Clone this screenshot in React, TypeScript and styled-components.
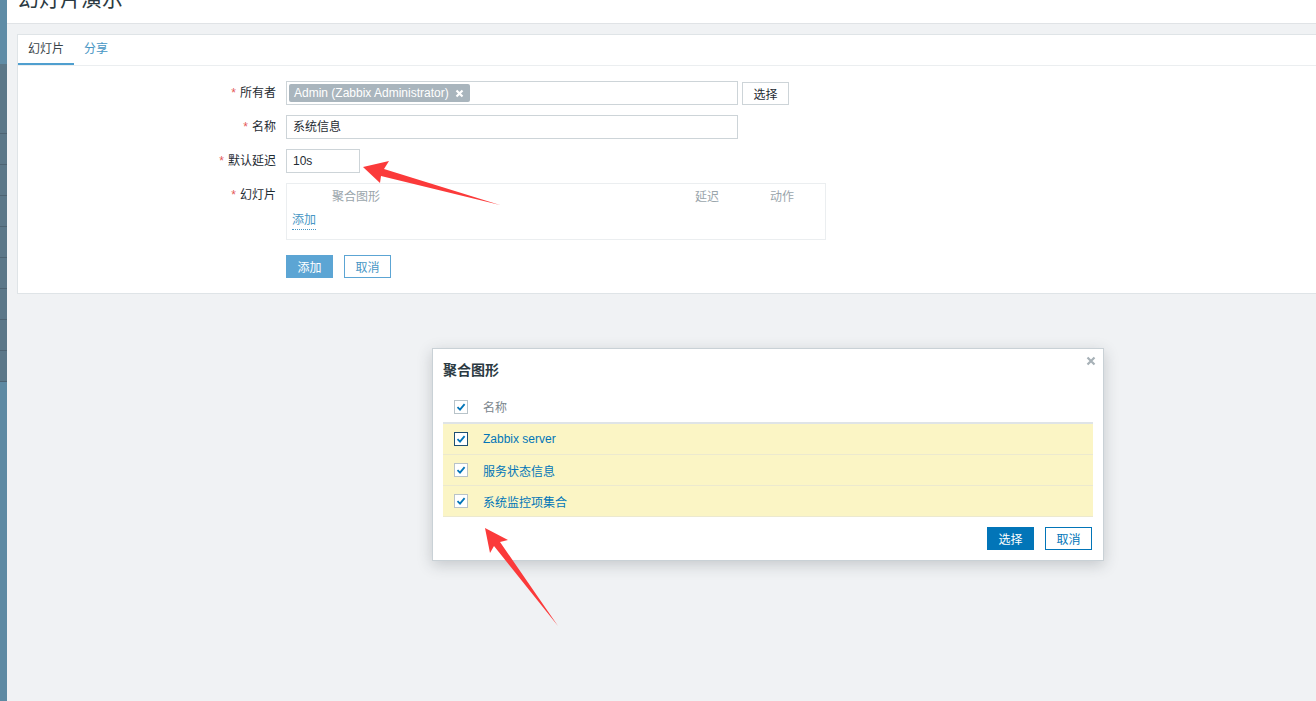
import React from 'react';
import styled, { createGlobalStyle } from 'styled-components';

const GlobalStyle = createGlobalStyle`
html, body {
  margin: 0;
  padding: 0;
}
body {
  font-family: "Liberation Sans", Arial, "Noto Sans CJK SC", sans-serif;
  font-size: 12px;
  color: #1f2c33;
  background: #f0f2f4;
  overflow: hidden;
}
* {
  box-sizing: border-box;
}
`;

const Page = styled.div`
position: relative;
display: flex;
width: 100%;
height: 100vh;
overflow: hidden;
`;

const Sidebar = styled.div`
width: 7px;
flex-shrink: 0;
background: #5e8aa3;
display: flex;
flex-direction: column;
`;

const SideLogo = styled.div`
height: 64px;
background: #5f8ca6;
`;

const SideItem = styled.div<{ $tall?: boolean }>`
height: ${(p) => (p.$tall ? '70px' : '31px')};
background: #5b7788;
border-bottom: 1px solid #4d6372;
`;

const Main = styled.div`
flex: 1;
display: flex;
flex-direction: column;
min-width: 0;
`;

const Header = styled.div`
height: 24px;
background: #ffffff;
border-bottom: 1px solid #e0e3e6;
padding-left: 11px;
overflow: hidden;
`;

const Title = styled.h1`
margin: -13px 0 0 0;
font-size: 21px;
font-weight: normal;
line-height: 24px;
color: #2b3a42;
`;

const Content = styled.div`
padding: 10px 0 0 10px;
`;

const Card = styled.div`
background: #ffffff;
border: 1px solid #dfe4e7;
margin-right: -2px;
`;

const TabStrip = styled.div`
display: flex;
border-bottom: 1px solid #ebeef0;
`;

const Tab = styled.div<{ $active?: boolean }>`
padding: 0 10px;
line-height: 28px;
border-bottom: 2px solid ${(p) => (p.$active ? '#4f9fcf' : 'transparent')};
color: ${(p) => (p.$active ? '#3a444a' : '#4796c4')};
cursor: pointer;
`;

const Form = styled.div`
display: grid;
grid-template-columns: 258px 1fr;
column-gap: 10px;
row-gap: 10px;
padding: 15px 0 15px;
`;

const Label = styled.div`
text-align: right;
line-height: 24px;
color: #1f2c33;
`;

const Req = styled.span`
color: #e45959;
margin-right: 4px;
`;

const Field = styled.div`
display: flex;
align-items: flex-start;
gap: 4px;
`;

const MultiBox = styled.div`
width: 452px;
height: 24px;
border: 1px solid #cdd4d8;
padding: 2px;
display: flex;
align-items: center;
`;

const TagChip = styled.span`
display: inline-flex;
align-items: center;
gap: 6px;
height: 18px;
padding: 0 6px 0 5px;
background: #a9b5bd;
color: #ffffff;
border-radius: 2px;
line-height: 18px;
`;

const TextInput = styled.div<{ $width: number }>`
width: ${(p) => p.$width}px;
height: 24px;
border: 1px solid #cdd4d8;
padding: 0 6px;
line-height: 22px;
color: #1f2c33;
background: #ffffff;
`;

const PlainBtn = styled.button`
height: 23px;
min-width: 47px;
margin-top: 1px;
padding: 0 10px;
background: #ffffff;
border: 1px solid #cdd4d8;
color: #1f2c33;
font: inherit;
cursor: pointer;
`;

const SlideTable = styled.div`
width: 540px;
height: 57px;
border: 1px solid #ebeef0;
padding-top: 2px;
`;

const SlideHead = styled.div`
display: grid;
grid-template-columns: 40px 363px 75px 1fr;
line-height: 23px;
color: #9aa5ab;
& > span {
  padding: 0 5px;
}
`;

const AddLink = styled.span`
display: inline-block;
margin-left: 5px;
line-height: 17px;
margin-top: 3px;
color: #4796c4;
border-bottom: 1px dotted #4796c4;
cursor: pointer;
`;

const ButtonRow = styled.div`
grid-column: 2;
display: flex;
gap: 11px;
margin-top: 5px;
`;

const Button = styled.button<{ $primary?: boolean; $tone?: 'light' | 'dark' }>`
height: 23px;
min-width: 47px;
padding: 0 10px;
font: inherit;
cursor: pointer;
border: 1px solid ${(p) => (p.$tone === 'dark' ? '#0275b8' : '#5ca5d4')};
background: ${(p) => (p.$primary ? (p.$tone === 'dark' ? '#0275b8' : '#5ca5d4') : '#ffffff')};
color: ${(p) => (p.$primary ? '#ffffff' : p.$tone === 'dark' ? '#0275b8' : '#4796c4')};
`;

const Modal = styled.div`
position: absolute;
left: 432px;
top: 348px;
width: 672px;
background: #ffffff;
border: 1px solid #c9d1d6;
box-shadow: 0 4px 14px rgba(40, 50, 60, 0.22);
padding: 0 10px 10px;
`;

const ModalTitle = styled.div`
padding-top: 11px;
line-height: 20px;
font-size: 14px;
font-weight: bold;
color: #2b3a42;
margin-bottom: 11px;
`;

const CloseBtn = styled.div`
position: absolute;
top: 6px;
right: 7px;
width: 10px;
height: 10px;
cursor: pointer;
`;

const ListHead = styled.div`
display: flex;
align-items: center;
gap: 15px;
height: 33px;
padding: 0 11px;
border-bottom: 2px solid #dfe4e7;
color: #7a868d;
`;

const ListRow = styled.div`
display: flex;
align-items: center;
gap: 15px;
height: 31px;
padding: 0 11px;
background: #fbf5c5;
border-bottom: 1px solid #ece9cf;
color: #0275b8;
&:last-child {
  border-bottom: none;
  height: 30px;
}
`;

const Box = styled.span<{ $focus?: boolean }>`
display: inline-flex;
align-items: center;
justify-content: center;
width: 14px;
height: 14px;
border: 1px solid ${(p) => (p.$focus ? '#1d4f73' : '#b8c3c9')};
background: #ffffff;
flex-shrink: 0;
`;

const ModalFooter = styled.div`
display: flex;
justify-content: flex-end;
gap: 11px;
padding-top: 10px;
padding-right: 1px;
`;

const Overlay = styled.svg`
position: absolute;
left: 0;
top: 0;
pointer-events: none;
`;

const Check = () => (
  <svg width="12" height="12" viewBox="0 0 12 12">
    <path d="M2.5 6.2 L5 8.6 L9.6 3.2" fill="none" stroke="#0275b8" strokeWidth="1.8" />
  </svg>
);

const CheckBox: React.FC<{ focus?: boolean }> = ({ focus }) => (
  <Box $focus={focus}>
    <Check />
  </Box>
);

const graphs = ['Zabbix server', '服务状态信息', '系统监控项集合'];

const App: React.FC = () => {
  return (
    <Page>
      <GlobalStyle />
      <Sidebar>
        <SideLogo />
        <SideItem $tall />
        {Array.from({ length: 8 }).map((_, i) => (
          <SideItem key={i} />
        ))}
      </Sidebar>
      <Main>
        <Header>
          <Title>幻灯片演示</Title>
        </Header>
        <Content>
          <Card>
            <TabStrip>
              <Tab $active>幻灯片</Tab>
              <Tab>分享</Tab>
            </TabStrip>
            <Form>
              <Label><Req>*</Req>所有者</Label>
              <Field>
                <MultiBox>
                  <TagChip>
                    Admin (Zabbix Administrator)
                    <svg width="9" height="9" viewBox="0 0 9 9">
                      <path d="M1.5 1.5 L7.5 7.5 M7.5 1.5 L1.5 7.5" stroke="#ffffff" strokeWidth="2.2" />
                    </svg>
                  </TagChip>
                </MultiBox>
                <PlainBtn>选择</PlainBtn>
              </Field>

              <Label><Req>*</Req>名称</Label>
              <Field>
                <TextInput $width={452}>系统信息</TextInput>
              </Field>

              <Label><Req>*</Req>默认延迟</Label>
              <Field>
                <TextInput $width={74}>10s</TextInput>
              </Field>

              <Label><Req>*</Req>幻灯片</Label>
              <Field>
                <SlideTable>
                  <SlideHead>
                    <span />
                    <span>聚合图形</span>
                    <span>延迟</span>
                    <span>动作</span>
                  </SlideHead>
                  <AddLink>添加</AddLink>
                </SlideTable>
              </Field>

              <ButtonRow>
                <Button $primary>添加</Button>
                <Button>取消</Button>
              </ButtonRow>
            </Form>
          </Card>
        </Content>
      </Main>

      <Modal>
        <ModalTitle>聚合图形</ModalTitle>
        <CloseBtn>
          <svg width="10" height="10" viewBox="0 0 10 10">
            <path d="M1.5 1.5 L8.5 8.5 M8.5 1.5 L1.5 8.5" stroke="#a7b1b7" strokeWidth="2.2" />
          </svg>
        </CloseBtn>
        <ListHead>
          <CheckBox />
          <span>名称</span>
        </ListHead>
        {graphs.map((g, i) => (
          <ListRow key={g}>
            <CheckBox focus={i === 0} />
            <span>{g}</span>
          </ListRow>
        ))}
        <ModalFooter>
          <Button $primary $tone="dark">选择</Button>
          <Button $tone="dark">取消</Button>
        </ModalFooter>
      </Modal>

      <Overlay width="1316" height="701" viewBox="0 0 1316 701">
        <polygon
          points="363,167 389,161 384,169 500,205 381,176 380,183"
          fill="#fb3a3a"
        />
        <polygon
          points="485,528 508,540 500,542 558,626 494,546 490,553"
          fill="#fb3a3a"
        />
      </Overlay>
    </Page>
  );
};

export default App;
